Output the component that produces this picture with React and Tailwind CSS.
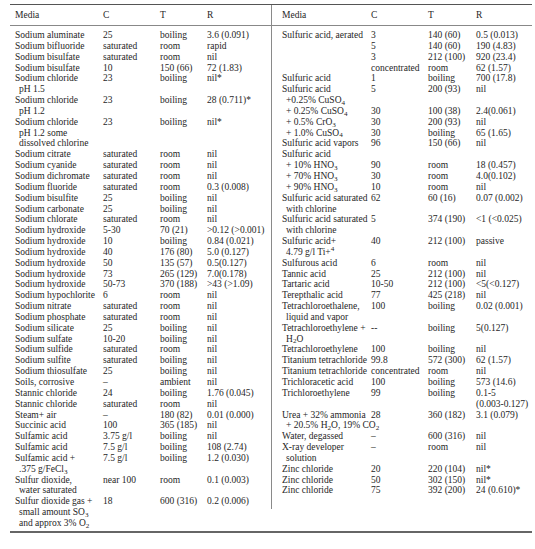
import React from "react";

const S = ({ children }) => <sub>{children}</sub>;
const P = ({ children }) => <sup>{children}</sup>;

const LEFT = [
  [["Sodium aluminate"], "25", "boiling", "3.6 (0.091)"],
  [["Sodium bifluoride"], "saturated", "room", "rapid"],
  [["Sodium bisulfate"], "saturated", "room", "nil"],
  [["Sodium bisulfate"], "10", "150 (66)", "72 (1.83)"],
  [["Sodium chloride", "pH 1.5"], "23", "boiling", "nil*"],
  [["Sodium chloride", "pH 1.2"], "23", "boiling", "28 (0.711)*"],
  [["Sodium chloride", "pH 1.2 some", "dissolved chlorine"], "23", "boiling", "nil*"],
  [["Sodium citrate"], "saturated", "room", "nil"],
  [["Sodium cyanide"], "saturated", "room", "nil"],
  [["Sodium dichromate"], "saturated", "room", "nil"],
  [["Sodium fluoride"], "saturated", "room", "0.3 (0.008)"],
  [["Sodium bisulfite"], "25", "boiling", "nil"],
  [["Sodium carbonate"], "25", "boiling", "nil"],
  [["Sodium chlorate"], "saturated", "room", "nil"],
  [["Sodium hydroxide"], "5-30", "70 (21)", ">0.12 (>0.001)"],
  [["Sodium hydroxide"], "10", "boiling", "0.84 (0.021)"],
  [["Sodium hydroxide"], "40", "176 (80)", "5.0 (0.127)"],
  [["Sodium hydroxide"], "50", "135 (57)", "0.5(0.127)"],
  [["Sodium hydroxide"], "73", "265 (129)", "7.0(0.178)"],
  [["Sodium hydroxide"], "50-73", "370 (188)", ">43 (>1.09)"],
  [["Sodium hypochlorite"], "6", "room", "nil"],
  [["Sodium nitrate"], "saturated", "room", "nil"],
  [["Sodium phosphate"], "saturated", "room", "nil"],
  [["Sodium silicate"], "25", "boiling", "nil"],
  [["Sodium sulfate"], "10-20", "boiling", "nil"],
  [["Sodium sulfide"], "saturated", "room", "nil"],
  [["Sodium sulfite"], "saturated", "boiling", "nil"],
  [["Sodium thiosulfate"], "25", "boiling", "nil"],
  [["Soils, corrosive"], "–", "ambient", "nil"],
  [["Stannic chloride"], "24", "boiling", "1.76 (0.045)"],
  [["Stannic chloride"], "saturated", "room", "nil"],
  [["Steam+ air"], "–", "180 (82)", "0.01 (0.000)"],
  [["Succinic acid"], "100", "365 (185)", "nil"],
  [["Sulfamic acid"], "3.75 g/l", "boiling", "nil"],
  [["Sulfamic acid"], "7.5 g/l", "boiling", "108 (2.74)"],
  [["Sulfamic acid +", <>.375 g/FeCl<S>3</S></>], "7.5 g/l", "boiling", "1.2 (0.030)"],
  [["Sulfur dioxide,", "water saturated"], "near 100", "room", "0.1 (0.003)"],
  [
    ["Sulfur dioxide gas +", <>small amount SO<S>3</S></>, <>and approx 3% O<S>2</S></>],
    "18",
    "600 (316)",
    "0.2 (0.006)",
  ],
];

const RIGHT = [
  [["Sulfuric acid, aerated"], "3", "140 (60)", "0.5 (0.013)"],
  [["\u00a0"], "5", "140 (60)", "190 (4.83)"],
  [["\u00a0"], "3", "212 (100)", "920 (23.4)"],
  [["\u00a0"], "concentrated", "room", "62 (1.57)"],
  [["Sulfuric acid"], "1", "boiling", "700 (17.8)"],
  [["Sulfuric acid", <>+0.25% CuSO<S>4</S></>], "5", "200 (93)", "nil"],
  [[<>+ 0.25% CuSO<S>4</S></>], "30", "100 (38)", "2.4(0.061)", true],
  [[<>+ 0.5% CrO<S>3</S></>], "30", "200 (93)", "nil", true],
  [[<>+ 1.0% CuSO<S>4</S></>], "30", "boiling", "65 (1.65)", true],
  [["Sulfuric acid vapors"], "96", "150 (66)", "nil"],
  [["Sulfuric acid"], "", "", ""],
  [[<>+ 10% HNO<S>3</S></>], "90", "room", "18 (0.457)", true],
  [[<>+ 70% HNO<S>3</S></>], "30", "room", "4.0(0.102)", true],
  [[<>+ 90% HNO<S>3</S></>], "10", "room", "nil", true],
  [["Sulfuric acid saturated", "with chlorine"], "62", "60 (16)", "0.07 (0.002)"],
  [["Sulfuric acid saturated", "with chlorine"], "5", "374 (190)", "<1 (<0.025)"],
  [["Sulfuric acid+", <>4.79 g/l Ti+<P>4</P></>], "40", "212 (100)", "passive"],
  [["Sulfurous acid"], "6", "room", "nil"],
  [["Tannic acid"], "25", "212 (100)", "nil"],
  [["Tartaric acid"], "10-50", "212 (100)", "<5(<0.127)"],
  [["Terepthalic acid"], "77", "425 (218)", "nil"],
  [["Tetrachloroethalene,", "liquid and vapor"], "100", "boiling", "0.02 (0.001)"],
  [["Tetrachloroethylene +", <>H<S>2</S>O</>], "--", "boiling", "5(0.127)"],
  [["Tetrachloroethylene"], "100", "boiling", "nil"],
  [["Titanium tetrachloride"], "99.8", "572 (300)", "62 (1.57)"],
  [["Titanium tetrachloride"], "concentrated", "room", "nil"],
  [["Trichloracetic acid"], "100", "boiling", "573 (14.6)"],
  [["Trichloroethylene"], "99", "boiling", ["0.1-5", "(0.003-0.127)"]],
  [
    ["Urea + 32% ammonia", <>+ 20.5% H<S>2</S>O, 19% CO<S>2</S></>],
    "28",
    "360 (182)",
    "3.1 (0.079)",
  ],
  [["Water, degassed"], "–", "600 (316)", "nil"],
  [["X-ray developer", "solution"], "–", "room", "nil"],
  [["Zinc chloride"], "20", "220 (104)", "nil*"],
  [["Zinc chloride"], "50", "302 (150)", "nil*"],
  [["Zinc chloride"], "75", "392 (200)", "24 (0.610)*"],
];

function Row({ row, grid }) {
  const [m, c, t, r, ind] = row;
  return (
    <div className={grid}>
      <div>
        {m.map((line, i) => (
          <div key={i} className={i > 0 || ind ? "pl-[4px] whitespace-nowrap" : "whitespace-nowrap"}>
            {line}
          </div>
        ))}
      </div>
      <div className="whitespace-nowrap">{c}</div>
      <div className="whitespace-nowrap">{t}</div>
      <div className="whitespace-nowrap">
        {Array.isArray(r) ? r.map((x, i) => <div key={i}>{x}</div>) : r}
      </div>
    </div>
  );
}

export default function App() {
  const leftGrid = "grid grid-cols-[88px_57px_47px_1fr] pl-[5px]";
  const rightGrid = "grid grid-cols-[89px_57px_48px_1fr] pl-[10px]";
  return (
    <div className="w-[535px] h-[549px] bg-white overflow-hidden font-['Liberation_Serif','Times_New_Roman',serif] text-[9.5px] leading-[10.85px] text-[#262626]">
      <div className="pt-[4px] pl-[10px] pr-[3px]">
        <div className="border-t-[1.5px] border-[#555]" />
        <div className="flex items-start">
          <div className="w-[261px]">
            <div className={"h-[21px] items-center border-b border-[#888] " + leftGrid}>
              <div>Media</div>
              <div>C</div>
              <div>T</div>
              <div>R</div>
            </div>
            <div className="pt-[4px]">
              {LEFT.map((row, i) => (
                <Row key={i} row={row} grid={leftGrid} />
              ))}
            </div>
          </div>
          <div className="flex-1 h-[504px] border-l border-[#8a8a8a]">
            <div className={"h-[21px] items-center border-b border-[#888] " + rightGrid}>
              <div>Media</div>
              <div>C</div>
              <div>T</div>
              <div>R</div>
            </div>
            <div className="pt-[4px]">
              {RIGHT.map((row, i) => (
                <Row key={i} row={row} grid={rightGrid} />
              ))}
            </div>
          </div>
        </div>
        <div className="mt-[2px] border-t-2 border-[#666]" />
      </div>
    </div>
  );
}
